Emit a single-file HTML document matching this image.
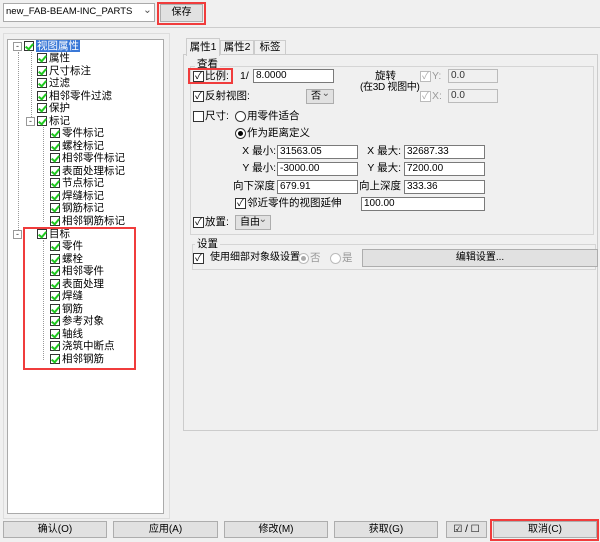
<!DOCTYPE html><html><head><meta charset="utf-8"><style>
*{box-sizing:border-box;margin:0;padding:0}
body{width:600px;height:542px;background:#f0f0f0;position:relative;overflow:hidden;font-family:"Liberation Sans","Noto Sans CJK SC",sans-serif;font-size:10.5px;color:#000}
.a{position:absolute}
.t{position:absolute;white-space:nowrap;line-height:12px}
.r{position:absolute;white-space:nowrap;line-height:12px;text-align:right}
.inp{position:absolute;background:#fff;border:1px solid #7a7a7a;height:14px;font-size:10px;line-height:12px;padding-left:2px;white-space:nowrap;overflow:hidden}
.gi{background:#f0f0f0;border-color:#bbb;color:#333}
.cb{position:absolute;width:11px;height:11px;border:1px solid #333;background:#fff;font-size:10px;line-height:9px;text-align:center}
.tc{position:absolute;width:10px;height:10px;border:1px solid #333;background:#fff}
.tc:after{content:"";position:absolute;left:2px;top:0px;width:3px;height:6px;border:solid #1ec81e;border-width:0 2px 2px 0;transform:rotate(40deg)}
.rd{position:absolute;width:11px;height:11px;border:1px solid #333;border-radius:50%;background:#fff}
.btn{position:absolute;background:#e1e1e1;border:1px solid #adadad;text-align:center;font-size:10px}
.red{position:absolute;border:2px solid #f03c3c}
.grp{position:absolute;border:1px solid #d5d5d5}
.vl{position:absolute;border-left:1px dotted #999}
.sel{position:absolute;background:#e1e1e1;border:1px solid #adadad;height:15px;font-size:10px;line-height:13px;padding-left:4px}
.sel span{position:absolute;right:3px;top:-3px;color:#555}
</style></head><body>
<div class="inp" style="left:3px;top:3px;width:152px;height:19px;line-height:16px;border-color:#aaa;font-size:9.5px">new_FAB-BEAM-INC_PARTS</div>
<div class="a" style="left:143px;top:4px;color:#555">&#8964;</div>
<div class="btn" style="left:160px;top:4px;width:43px;height:18px;line-height:16px">保存</div>
<div class="red" style="left:157px;top:2px;width:49px;height:23px"></div>
<div class="a" style="left:0;top:27px;width:600px;border-top:1px solid #ccc"></div>
<div class="grp" style="left:3px;top:33px;width:167px;height:486px;border-color:#ddd"></div>
<div class="a" style="left:7px;top:39px;width:157px;height:475px;background:#fff;border:1px solid #aaa"></div>
<div class="vl" style="left:18px;top:52px;height:182px"></div>
<div class="vl" style="left:31px;top:52px;height:69px"></div>
<div class="vl" style="left:43px;top:127px;height:95px"></div>
<div class="vl" style="left:43px;top:240px;height:120px"></div>
<div class="a" style="left:13px;top:42px;width:9px;height:9px;border:1px solid #999;background:#fff;font-size:9px;line-height:6px;text-align:center;color:#333">-</div>
<div class="a" style="left:26px;top:117px;width:9px;height:9px;border:1px solid #999;background:#fff;font-size:9px;line-height:6px;text-align:center;color:#333">-</div>
<div class="a" style="left:13px;top:230px;width:9px;height:9px;border:1px solid #999;background:#fff;font-size:9px;line-height:6px;text-align:center;color:#333">-</div>
<div class="tc" style="left:24px;top:41px"></div><div class="t" style="left:36px;top:40px;background:#3a78d7;color:#fff;padding:0 1px">视图属性</div>
<div class="tc" style="left:37px;top:53px"></div><div class="t" style="left:49px;top:52px">属性</div>
<div class="tc" style="left:37px;top:66px"></div><div class="t" style="left:49px;top:65px">尺寸标注</div>
<div class="tc" style="left:37px;top:78px"></div><div class="t" style="left:49px;top:77px">过滤</div>
<div class="tc" style="left:37px;top:91px"></div><div class="t" style="left:49px;top:90px">相邻零件过滤</div>
<div class="tc" style="left:37px;top:103px"></div><div class="t" style="left:49px;top:102px">保护</div>
<div class="tc" style="left:37px;top:116px"></div><div class="t" style="left:49px;top:115px">标记</div>
<div class="tc" style="left:50px;top:128px"></div><div class="t" style="left:62px;top:127px">零件标记</div>
<div class="tc" style="left:50px;top:141px"></div><div class="t" style="left:62px;top:140px">螺栓标记</div>
<div class="tc" style="left:50px;top:153px"></div><div class="t" style="left:62px;top:152px">相邻零件标记</div>
<div class="tc" style="left:50px;top:166px"></div><div class="t" style="left:62px;top:165px">表面处理标记</div>
<div class="tc" style="left:50px;top:178px"></div><div class="t" style="left:62px;top:177px">节点标记</div>
<div class="tc" style="left:50px;top:191px"></div><div class="t" style="left:62px;top:190px">焊缝标记</div>
<div class="tc" style="left:50px;top:203px"></div><div class="t" style="left:62px;top:202px">钢筋标记</div>
<div class="tc" style="left:50px;top:216px"></div><div class="t" style="left:62px;top:215px">相邻钢筋标记</div>
<div class="tc" style="left:37px;top:229px"></div><div class="t" style="left:49px;top:228px">目标</div>
<div class="tc" style="left:50px;top:241px"></div><div class="t" style="left:62px;top:240px">零件</div>
<div class="tc" style="left:50px;top:254px"></div><div class="t" style="left:62px;top:253px">螺栓</div>
<div class="tc" style="left:50px;top:266px"></div><div class="t" style="left:62px;top:265px">相邻零件</div>
<div class="tc" style="left:50px;top:279px"></div><div class="t" style="left:62px;top:278px">表面处理</div>
<div class="tc" style="left:50px;top:291px"></div><div class="t" style="left:62px;top:290px">焊缝</div>
<div class="tc" style="left:50px;top:304px"></div><div class="t" style="left:62px;top:303px">钢筋</div>
<div class="tc" style="left:50px;top:316px"></div><div class="t" style="left:62px;top:315px">参考对象</div>
<div class="tc" style="left:50px;top:329px"></div><div class="t" style="left:62px;top:328px">轴线</div>
<div class="tc" style="left:50px;top:341px"></div><div class="t" style="left:62px;top:340px">浇筑中断点</div>
<div class="tc" style="left:50px;top:354px"></div><div class="t" style="left:62px;top:353px">相邻钢筋</div>
<div class="red" style="left:23px;top:227px;width:113px;height:143px"></div>

<div class="a" style="left:183px;top:54px;width:415px;height:377px;background:#fff;border:1px solid #ccc"></div>
<div class="a" style="left:184px;top:55px;width:413px;height:375px;background:#f0f0f0"></div>
<div class="a" style="left:186px;top:38px;width:34px;height:18px;background:#f0f0f0;border:1px solid #ccc;border-bottom:none;text-align:center;line-height:16px">属性1</div>
<div class="a" style="left:220px;top:40px;width:34px;height:15px;border:1px solid #ccc;border-bottom:none;text-align:center;line-height:13px">属性2</div>
<div class="a" style="left:254px;top:40px;width:32px;height:15px;border:1px solid #ccc;border-bottom:none;text-align:center;line-height:13px">标签</div>

<div class="grp" style="left:190px;top:66px;width:404px;height:169px"></div>
<div class="t" style="left:195px;top:58px;background:#f0f0f0;padding:0 2px">查看</div>
<div class="cb" style="left:193px;top:71px">✓</div><div class="t" style="left:205px;top:70px">比例:</div>
<div class="red" style="left:188px;top:68px;width:45px;height:16px"></div>
<div class="t" style="left:240px;top:70px">1/</div>
<div class="inp" style="left:253px;top:69px;width:81px">8.0000</div>
<div class="t" style="left:375px;top:70px">旋转</div>
<div class="t" style="left:360px;top:82px;font-size:10px;letter-spacing:-0.3px">(在3D 视图中)</div>
<div class="cb" style="left:420px;top:71px;border-color:#bbb;color:#aaa">✓</div><div class="t" style="left:432px;top:70px;color:#999">Y:</div>
<div class="inp gi" style="left:448px;top:69px;width:50px">0.0</div>
<div class="cb" style="left:420px;top:91px;border-color:#bbb;color:#aaa">✓</div><div class="t" style="left:432px;top:90px;color:#999">X:</div>
<div class="inp gi" style="left:448px;top:89px;width:50px">0.0</div>
<div class="cb" style="left:193px;top:91px">✓</div><div class="t" style="left:205px;top:90px">反射视图:</div>
<div class="sel" style="left:306px;top:89px;width:28px">否<span>&#8964;</span></div>
<div class="cb" style="left:193px;top:111px"></div><div class="t" style="left:205px;top:110px">尺寸:</div>
<div class="rd" style="left:235px;top:111px"></div><div class="t" style="left:247px;top:110px">用零件适合</div>
<div class="rd" style="left:235px;top:128px"></div><div class="a" style="left:238px;top:131px;width:5px;height:5px;border-radius:50%;background:#000"></div><div class="t" style="left:247px;top:127px">作为距离定义</div>
<div class="r" style="left:220px;width:56px;top:145px">X 最小:</div><div class="inp" style="left:277px;top:145px;width:81px">31563.05</div>
<div class="r" style="left:348px;width:53px;top:145px">X 最大:</div><div class="inp" style="left:404px;top:145px;width:81px">32687.33</div>
<div class="r" style="left:220px;width:56px;top:162px">Y 最小:</div><div class="inp" style="left:277px;top:162px;width:81px">-3000.00</div>
<div class="r" style="left:348px;width:53px;top:162px">Y 最大:</div><div class="inp" style="left:404px;top:162px;width:81px">7200.00</div>
<div class="r" style="left:220px;width:55px;top:180px">向下深度</div><div class="inp" style="left:277px;top:180px;width:81px">679.91</div>
<div class="r" style="left:348px;width:53px;top:180px">向上深度</div><div class="inp" style="left:404px;top:180px;width:81px">333.36</div>
<div class="cb" style="left:235px;top:198px">✓</div><div class="t" style="left:247px;top:197px">邻近零件的视图延伸</div>
<div class="inp" style="left:361px;top:197px;width:124px">100.00</div>
<div class="cb" style="left:193px;top:217px">✓</div><div class="t" style="left:205px;top:216px">放置:</div>
<div class="sel" style="left:235px;top:215px;width:36px">自由<span>&#8964;</span></div>

<div class="grp" style="left:192px;top:244px;width:404px;height:26px"></div>
<div class="t" style="left:195px;top:238px;background:#f0f0f0;padding:0 2px">设置</div>
<div class="cb" style="left:193px;top:253px">✓</div><div class="t" style="left:210px;top:252px;font-size:10px">使用细部对象级设置</div>
<div class="rd" style="left:298px;top:253px;border-color:#bbb"></div><div class="a" style="left:301px;top:256px;width:5px;height:5px;border-radius:50%;background:#aaa"></div><div class="t" style="left:310px;top:252px;color:#999">否</div>
<div class="rd" style="left:330px;top:253px;border-color:#bbb"></div><div class="t" style="left:342px;top:252px;color:#999">是</div>
<div class="btn" style="left:362px;top:249px;width:236px;height:18px;line-height:16px">编辑设置...</div>

<div class="btn" style="left:3px;top:521px;width:104px;height:17px;line-height:15px">确认(O)</div>
<div class="btn" style="left:113px;top:521px;width:105px;height:17px;line-height:15px">应用(A)</div>
<div class="btn" style="left:224px;top:521px;width:104px;height:17px;line-height:15px">修改(M)</div>
<div class="btn" style="left:334px;top:521px;width:104px;height:17px;line-height:15px">获取(G)</div>
<div class="btn" style="left:446px;top:521px;width:41px;height:17px;line-height:15px">☑ / ☐</div>
<div class="btn" style="left:493px;top:521px;width:104px;height:17px;line-height:15px">取消(C)</div>
<div class="red" style="left:490px;top:519px;width:109px;height:22px"></div>
</body></html>
